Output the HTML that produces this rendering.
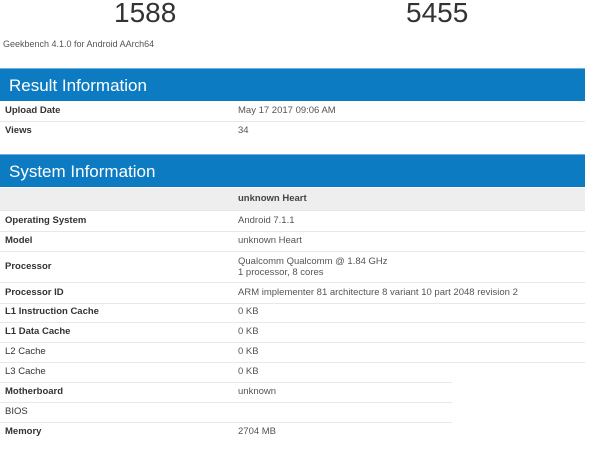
<!DOCTYPE html>
<html><head><style>
body{margin:0;width:600px;height:450px;background:#fff;font-family:"Liberation Sans",sans-serif;position:relative;overflow:hidden;color:#333}
.a{position:absolute;white-space:nowrap}
.num{font-size:28px;color:#333;top:-3px}
.bar{position:absolute;left:0;width:585px;height:33px;background:#0c7bc2;color:#fff;font-size:17px;line-height:34px;padding-left:9px;box-sizing:border-box;border-top:1px solid #6fb0dc}
.row{position:absolute;left:0;width:585px;height:20px;border-bottom:1px solid #e8e8e8;font-size:9.5px;line-height:20px}
.row b{position:absolute;left:5px;color:#333}
.row span{position:absolute;left:238px;color:#555}
</style></head><body>
<div class="a num" style="left:114px">1588</div>
<div class="a num" style="left:406px">5455</div>
<div class="a" style="left:3px;top:39px;font-size:9px;color:#555">Geekbench 4.1.0 for Android AArch64</div>
<div class="bar" style="top:68px">Result Information</div>
<div class="row" style="top:101px"><b>Upload Date</b><span>May 17 2017 09:06 AM</span></div>
<div class="row" style="top:121px;border:none"><b>Views</b><span>34</span></div>
<div class="bar" style="top:154px">System Information</div>
<div class="row" style="top:188px;height:22px;line-height:22px;background:#eee"><span style="font-weight:bold;color:#444">unknown Heart</span></div>
<div class="row" style="top:211px"><b>Operating System</b><span>Android 7.1.1</span></div>
<div class="row" style="top:231px"><b>Model</b><span>unknown Heart</span></div>
<div class="row" style="top:252px;height:30px;line-height:30px"><b>Processor</b><span style="line-height:11px;top:4px">Qualcomm Qualcomm @ 1.84 GHz<br>1 processor, 8 cores</span></div>
<div class="row" style="top:283px"><b>Processor ID</b><span>ARM implementer 81 architecture 8 variant 10 part 2048 revision 2</span></div>
<div class="row" style="top:302px"><b>L1 Instruction Cache</b><span>0 KB</span></div>
<div class="row" style="top:322px"><b>L1 Data Cache</b><span>0 KB</span></div>
<div class="row" style="top:342px"><b style="font-weight:normal">L2 Cache</b><span>0 KB</span></div>
<div class="row" style="top:362px;width:452px"><b style="font-weight:normal">L3 Cache</b><span>0 KB</span></div>
<div class="row" style="top:382px;width:452px"><b>Motherboard</b><span>unknown</span></div>
<div class="row" style="top:402px;width:452px"><b style="font-weight:normal">BIOS</b><span></span></div>
<div class="row" style="top:422px;border:none"><b>Memory</b><span>2704 MB</span></div>
</body></html>
